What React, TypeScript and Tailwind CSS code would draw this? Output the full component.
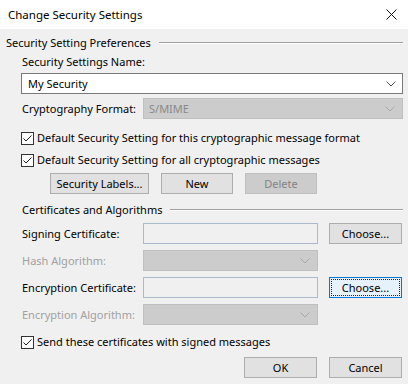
import React from "react";

const font = { fontFamily: '"Segoe UI", "Noto Sans", "Open Sans", sans-serif' };

function Chevron({ disabled }: { disabled?: boolean }) {
  return (
    <svg width="10" height="6" viewBox="0 0 10 6" className="shrink-0">
      <path d="M0.5 0.5 L5 5 L9.5 0.5" fill="none" stroke={disabled ? "#a8a8a8" : "#555"} strokeWidth="1" />
    </svg>
  );
}

function Check() {
  return (
    <div className="w-[13px] h-[13px] border border-[#333333] bg-white flex items-center justify-center shrink-0">
      <svg width="11" height="11" viewBox="0 0 11 11">
        <path d="M1.5 5.5 L4 8 L9.5 2.5" fill="none" stroke="#222" strokeWidth="1" />
      </svg>
    </div>
  );
}

function Btn({ children, w, disabled, focused }: { children: React.ReactNode; w: string; disabled?: boolean; focused?: boolean }) {
  if (disabled)
    return (
      <div className={`${w} h-[21px] shrink-0 border border-[#bfbfbf] bg-[#cccccc] text-[#838383] flex items-center justify-center whitespace-nowrap`}>{children}</div>
    );
  if (focused)
    return (
      <div className={`${w} h-[21px] shrink-0 border border-[#0078d7] bg-[#e5f1fb] p-[1px]`}>
        <div className="w-full h-full border border-dotted border-[#222] flex items-center justify-center whitespace-nowrap">{children}</div>
      </div>
    );
  return (
    <div className={`${w} h-[21px] shrink-0 border border-[#adadad] bg-[#e1e1e1] flex items-center justify-center whitespace-nowrap`}>{children}</div>
  );
}

function GroupHeader({ text, pl }: { text: string; pl: string }) {
  return (
    <div className={`flex items-center h-[16px] ${pl} pr-[5px]`}>
      <span className="whitespace-nowrap">{text}</span>
      <div className="flex-1 ml-[8px] border-t border-[#a0a0a0] border-b border-b-white h-[2px]" />
    </div>
  );
}

function DisabledSelect({ text }: { text?: string }) {
  return (
    <div className="w-[175px] h-[21px] shrink-0 border border-[#bfbfbf] bg-[#cccccc] flex items-center pl-[4px] pr-[7px] text-[#8a8a8a]">
      <span className="flex-1">{text}</span>
      <Chevron disabled />
    </div>
  );
}

export default function App() {
  return (
    <div className="w-[408px] h-[384px] bg-[#f0f0f0] text-[11px] leading-[16px] text-black overflow-hidden" style={font}>
      <div className="h-[29px] bg-white flex items-center pl-[8px] pr-[11px]">
        <span className="flex-1 whitespace-nowrap text-[11.5px]">Change Security Settings</span>
        <svg width="11" height="11" viewBox="0 0 11 11">
          <path d="M0.5 0.5 L10.5 10.5 M10.5 0.5 L0.5 10.5" stroke="#111" strokeWidth="1" />
        </svg>
      </div>

      <div className="pt-[6px]">
        <GroupHeader text="Security Setting Preferences" pl="pl-[6px]" />
        <div className="pl-[22px] mt-[3px] whitespace-nowrap">Security Settings Name:</div>
        <div className="ml-[21px] mr-[5px] mt-[3px] h-[21px] border border-[#7a7a7a] bg-white flex items-center pl-[6px] pr-[6px]">
          <span className="flex-1">My Security</span>
          <Chevron />
        </div>
        <div className="flex items-center mt-[4px] pl-[22px] pr-[5px]">
          <span className="w-[121px] shrink-0 whitespace-nowrap">Cryptography Format:</span>
          <div className="flex-1 h-[21px] border border-[#bfbfbf] bg-[#cccccc] flex items-center pl-[5px] pr-[7px] text-[#8a8a8a]">
            <span className="flex-1">S/MIME</span>
            <Chevron disabled />
          </div>
        </div>
        <div className="flex items-center gap-[3px] pl-[21px] mt-[11px]">
          <Check />
          <span className="whitespace-nowrap">Default Security Setting for this cryptographic message format</span>
        </div>
        <div className="flex items-center gap-[3px] pl-[21px] mt-[6px]">
          <Check />
          <span className="whitespace-nowrap">Default Security Setting for all cryptographic messages</span>
        </div>
        <div className="flex items-center pl-[50px] mt-[5px] gap-[12px]">
          <Btn w="w-[99px]">Security Labels...</Btn>
          <Btn w="w-[72px]">New</Btn>
          <Btn w="w-[72px]" disabled>Delete</Btn>
        </div>

        <div className="mt-[8px]">
          <GroupHeader text="Certificates and Algorithms" pl="pl-[22px]" />
        </div>

        <div className="flex items-center pl-[22px] mt-[5px] h-[21px]">
          <span className="w-[121px] shrink-0 whitespace-nowrap">Signing Certificate:</span>
          <div className="w-[175px] h-[21px] shrink-0 border border-[#acb9cb] bg-[#f0f0f0]" />
          <div className="ml-[11px]"><Btn w="w-[73px]">Choose...</Btn></div>
        </div>
        <div className="flex items-center pl-[22px] mt-[6px] h-[21px]">
          <span className="w-[121px] shrink-0 whitespace-nowrap text-[#a0a0a0]">Hash Algorithm:</span>
          <DisabledSelect />
        </div>
        <div className="flex items-center pl-[22px] mt-[6px] h-[21px]">
          <span className="w-[121px] shrink-0 whitespace-nowrap">Encryption Certificate:</span>
          <div className="w-[175px] h-[21px] shrink-0 border border-[#acb9cb] bg-[#f0f0f0]" />
          <div className="ml-[11px]"><Btn w="w-[73px]" focused>Choose...</Btn></div>
        </div>
        <div className="flex items-center pl-[22px] mt-[6px] h-[21px]">
          <span className="w-[121px] shrink-0 whitespace-nowrap text-[#a0a0a0]">Encryption Algorithm:</span>
          <DisabledSelect />
        </div>
        <div className="flex items-center gap-[3px] pl-[21px] mt-[9px]">
          <Check />
          <span className="whitespace-nowrap">Send these certificates with signed messages</span>
        </div>
        <div className="flex justify-end pr-[6px] mt-[7px] gap-[12px]">
          <Btn w="w-[73px]">OK</Btn>
          <Btn w="w-[73px]">Cancel</Btn>
        </div>
      </div>
    </div>
  );
}
